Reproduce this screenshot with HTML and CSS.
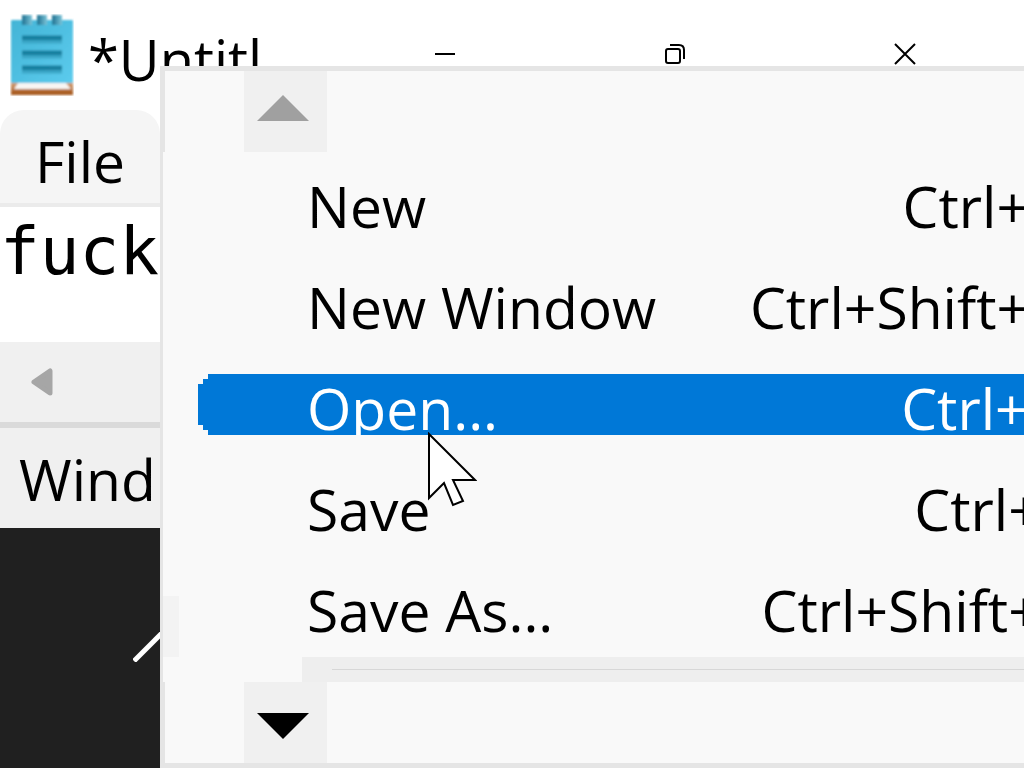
FILE: index.html
```html
<!DOCTYPE html>
<html lang="en">
<head>
    <meta charset="UTF-8">
    <meta name="viewport" content="width=device-width, initial-scale=1.0">
    <title>Notepad</title>
    <link rel="stylesheet" href="styles.css">
</head>
<body>
    <div class="window">
        <header class="title-bar">
            <svg class="app-icon" viewBox="0 0 64 82" aria-hidden="true">
                <defs>
                    <linearGradient id="page" x1="0" y1="0" x2="1" y2="1">
                        <stop offset="0" stop-color="#42b4d6"/>
                        <stop offset="1" stop-color="#5ccbed"/>
                    </linearGradient>
                    <linearGradient id="base" x1="0" y1="0" x2="0" y2="1">
                        <stop offset="0" stop-color="#e0b48f"/>
                        <stop offset="1" stop-color="#a04f12"/>
                    </linearGradient>
                    <linearGradient id="ring" x1="0" y1="0" x2="1" y2="0">
                        <stop offset="0" stop-color="#1b6f8f"/>
                        <stop offset="1" stop-color="#7cc4d8"/>
                    </linearGradient>
                    <filter id="soft"><feGaussianBlur stdDeviation="0.9"/></filter>
                </defs>
                <g filter="url(#soft)">
                    <rect x="1" y="66" width="62" height="15" fill="url(#base)"/>
                    <path d="M8 69H56L61 75H4Z" fill="#f8f5f3"/>
                    <rect x="1" y="6" width="62" height="63" rx="1" fill="url(#page)"/>
                    <g fill="url(#ring)">
                        <rect x="12" y="1" width="10" height="10"/>
                        <rect x="27" y="1" width="10" height="10"/>
                        <rect x="42" y="1" width="10" height="10"/>
                    </g>
                    <path d="M12 24H52M12 39H52M12 54H52" stroke="#157f9f" stroke-width="5"/>
                    <path d="M12 28H52M12 43H52M12 58H52" stroke="#3ba6c6" stroke-width="3"/>
                </g>
            </svg>
            <h1 class="title">*Untitl</h1>
            <button class="caption-button" aria-label="Minimize">
                <svg viewBox="0 0 22 22"><path d="M1 11H21"/></svg>
            </button>
            <button class="caption-button" aria-label="Restore">
                <svg viewBox="0 0 22 22"><rect x="2" y="6" width="14" height="14" rx="2"/><path d="M6 2H15Q20 2 20 7V16"/></svg>
            </button>
            <button class="caption-button" aria-label="Close">
                <svg viewBox="0 0 22 22"><path d="M1 1L21 21M21 1L1 21"/></svg>
            </button>
        </header>
        <nav class="menu-bar">
            <button class="menu-button">File</button>
        </nav>
        <textarea class="editor" aria-label="Text editor" spellcheck="false">fuck</textarea>
        <div class="scrollbar">
            <button class="scroll-left" aria-label="Scroll left">
                <svg viewBox="0 0 22 28"><path d="M19 3V25L3 14Z"/></svg>
            </button>
        </div>
        <footer class="status-bar">Wind</footer>
    </div>
    <div class="desktop">
        <svg class="desktop-line" viewBox="0 0 30 30" aria-hidden="true"><path d="M1 29L30 0"/></svg>
    </div>

    <div class="popup">
        <div class="popup-scroll">
            <button class="arrow up" aria-label="Scroll up" disabled>
                <svg viewBox="0 0 52 26"><path d="M0 26L26 0L52 26Z"/></svg>
            </button>
        </div>
        <div class="items">
            <button class="item"><span class="item-row"><span>New</span><span>Ctrl+N</span></span></button>
            <button class="item"><span class="item-row"><span>New Window</span><span>Ctrl+Shift+N</span></span></button>
            <button class="item selected"><span class="item-row"><span>Open...</span><span>Ctrl+O</span></span></button>
            <button class="item"><span class="item-row"><span>Save</span><span>Ctrl+S</span></span></button>
            <button class="item"><span class="item-row"><span>Save As...</span><span>Ctrl+Shift+S</span></span></button>
            <div class="edge-mark"></div>
        </div>
        <div class="separator"><hr></div>
        <div class="popup-scroll">
            <button class="arrow down" aria-label="Scroll down">
                <svg viewBox="0 0 52 26"><path d="M0 0L26 26L52 0Z"/></svg>
            </button>
        </div>
    </div>

    <svg class="cursor" viewBox="0 0 50 76" aria-hidden="true"><path d="M2 2V66L17 51L26 73L36 69L26 48H48Z"/></svg>
</body>
</html>
```

FILE: styles.css
```css
* {
    box-sizing: border-box;
}

body {
    position: relative;
    display: flex;
    flex-direction: column;
    min-height: 100vh;
    margin: 0;
    overflow: hidden;
    font-family: "Open Sans", "Noto Sans", sans-serif;
    font-size: 57px;
    color: #000;
    background-color: #fff;
}

button {
    padding: 0;
    border: 0;
    background: none;
    color: inherit;
    font: inherit;
}

svg {
    display: block;
}

.title-bar {
    display: flex;
    align-items: center;
    height: 110px;
    padding: 0 4px 0 10px;
}

.app-icon {
    flex: none;
    width: 64px;
    height: 82px;
}

.title {
    flex: 1;
    min-width: 0;
    margin: 0;
    padding: 8px 0 0 14px;
    font-size: 56px;
    font-weight: 400;
    line-height: 80px;
    white-space: nowrap;
}

.caption-button {
    display: flex;
    justify-content: center;
    align-items: center;
    flex: none;
    width: 230px;
    height: 108px;
    align-self: flex-start;
}

.caption-button svg {
    width: 22px;
    height: 22px;
    fill: none;
    stroke: #000;
    stroke-width: 2;
}

.menu-bar {
    height: 97px;
    border-bottom: 4px solid #ebebeb;
}

.menu-button {
    display: block;
    width: 160px;
    height: 93px;
    padding-top: 8px;
    border-radius: 24px 24px 0 0;
    background-color: #f5f5f5;
    line-height: 80px;
}

.editor {
    display: block;
    width: 100%;
    height: 135px;
    padding: 0;
    border: 0;
    outline: none;
    resize: none;
    overflow: hidden;
    background-color: #fff;
    font-family: "DejaVu Sans Mono", monospace;
    font-size: 66px;
    line-height: 90px;
}

.scrollbar {
    display: flex;
    align-items: center;
    height: 86px;
    padding-left: 31px;
    border-bottom: 6px solid #dadada;
    background-color: #f0f0f0;
}

.scroll-left svg {
    width: 22px;
    height: 28px;
    fill: #a6a6a6;
    stroke: #a6a6a6;
    stroke-width: 5;
    stroke-linejoin: round;
}

.status-bar {
    height: 100px;
    padding-left: 19px;
    background-color: #f0f0f0;
    line-height: 102px;
}

.desktop {
    flex: 1;
    min-height: 240px;
    padding: 104px 0 0 133px;
    background-color: #202020;
}

.desktop-line {
    width: 30px;
    height: 30px;
    fill: none;
    stroke: #fff;
    stroke-width: 5;
}

/* open File menu, runs off the right side */
.popup {
    position: absolute;
    top: 66px;
    left: 160px;
    right: -53px;
    border: 5px solid #e5e5e5;
    border-left-width: 3px;
    background-color: #f9f9f9;
}

.popup-scroll {
    height: 81px;
    padding-left: 79px;
    border-left: 2px solid #e5e5e5;
}

.arrow {
    display: flex;
    justify-content: center;
    align-items: center;
    width: 83px;
    height: 81px;
    padding-right: 6px;
    background-color: #f0f0f0;
}

.arrow svg {
    width: 52px;
    height: 26px;
    fill: #000;
}

.arrow.up {
    padding-bottom: 7px;
}

.arrow.down {
    padding-top: 6px;
}

.arrow.up svg {
    fill: #a0a0a0;
}

.items {
    position: relative;
}

.item {
    display: block;
    width: 100%;
    height: 101px;
    padding: 20px 0 20px 35px;
}

.item-row {
    display: flex;
    justify-content: space-between;
    height: 61px;
    padding-left: 109px;
    overflow: hidden;
    line-height: 69px;
    white-space: nowrap;
}

/* stepped corners, 5px per step */
.selected .item-row {
    background-color: #0078d7;
    color: #fff;
    clip-path: polygon(
        10px 0, 100% 0, 100% 100%, 10px 100%,
        10px 56px, 5px 56px, 5px 51px, 0 51px,
        0 10px, 5px 10px, 5px 5px, 10px 5px
    );
}

.edge-mark {
    position: absolute;
    left: 0;
    bottom: 0;
    width: 16px;
    height: 61px;
    background-color: #f3f3f3;
}

.separator {
    height: 25px;
    margin-left: 139px;
    padding: 12px 0 0 30px;
    background-color: #eee;
}

.separator hr {
    height: 1px;
    margin: 0;
    border: 0;
    background-color: #d7d7d7;
}

.cursor {
    position: absolute;
    top: 432px;
    left: 427px;
    width: 50px;
    height: 76px;
    fill: #fff;
    stroke: #000;
    stroke-width: 2;
}
```
